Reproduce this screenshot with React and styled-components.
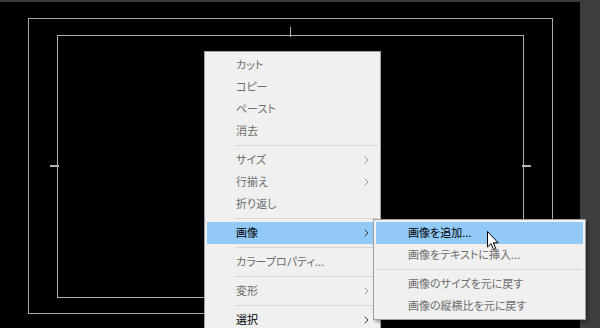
import React from 'react';
import styled, { createGlobalStyle } from 'styled-components';

const GlobalStyle = createGlobalStyle`
  html, body {
    margin: 0;
    padding: 0;
    background: #000;
  }
  body {
    font-family: 'Noto Sans CJK JP', 'Noto Sans', sans-serif;
  }
`;

// Ventana completa
const Screen = styled.div`
  width: 600px;
  height: 328px;
  display: flex;
  flex-direction: column;
  background: #3c3c3c;
  overflow: hidden;
`;

const Body = styled.div`
  flex: 1;
  display: flex;
  margin-top: 2px;
`;

// Lienzo negro con los marcos
const Canvas = styled.div`
  position: relative;
  flex: 1;
  background: #000;
  padding: 16px 0 0 28px;
`;

const SidePanel = styled.div`
  width: 20px;
  background: #3e3e3e;
`;

const Frame = styled.div`
  box-sizing: border-box;
  border: 1px solid ${({ $color }) => $color};
  width: ${({ $w }) => $w}px;
  height: ${({ $h }) => $h}px;
  padding: ${({ $pad }) => $pad};
`;

const Tick = styled.div`
  position: absolute;
  background: #b4b4b4;
  left: ${({ $x }) => $x}px;
  top: ${({ $y }) => $y}px;
  width: ${({ $w }) => $w}px;
  height: ${({ $h }) => $h}px;
`;

// Menús contextuales
const Menu = styled.div`
  position: absolute;
  left: ${({ $x }) => $x}px;
  top: ${({ $y }) => $y}px;
  width: ${({ $w }) => $w}px;
  box-sizing: border-box;
  background: #f0f0f0;
  border: 1px solid #a0a0a0;
  padding: 2px;
  box-shadow: 2px 2px 3px rgba(0, 0, 0, 0.35);
  z-index: ${({ $z }) => $z || 1};
`;

const Item = styled.div`
  box-sizing: border-box;
  height: 22px;
  display: flex;
  align-items: center;
  justify-content: space-between;
  padding: 0 9px 2px ${({ $indent }) => $indent}px;
  font-size: 11px;
  font-feature-settings: 'palt';
  color: ${({ $dark }) => ($dark ? '#000' : '#6d6d6d')};
  background: ${({ $active }) => ($active ? '#91c9f7' : 'transparent')};
  white-space: nowrap;
`;

const Separator = styled.div`
  height: 1px;
  background: #d7d7d7;
  margin: 3px 0 3px ${({ $indent }) => $indent}px;
`;

const ArrowBox = styled.span`
  display: flex;
  padding-top: 2px;
`;

const Arrow = ({ dark }) => (
  <ArrowBox>
    <svg width="5" height="8" viewBox="0 0 5 8">
      <path d="M0.7 0.7 L4 4 L0.7 7.3" fill="none" stroke={dark ? '#333' : '#9a9a9a'} strokeWidth="1" />
    </svg>
  </ArrowBox>
);

const CursorBox = styled.div`
  position: absolute;
  left: 487px;
  top: 229px;
  z-index: 5;
  line-height: 0;
`;

const Cursor = () => (
  <CursorBox>
    <svg width="13" height="20" viewBox="0 0 13 20">
      <path
        d="M0.5 0.5 L0.5 16 L4 12.6 L6.6 18.6 L8.8 17.6 L6.3 11.8 L11.2 11.8 Z"
        fill="#fff"
        stroke="#000"
        strokeWidth="1"
        strokeLinejoin="round"
      />
    </svg>
  </CursorBox>
);

const mainItems = [
  { label: 'カット' },
  { label: 'コピー' },
  { label: 'ペースト' },
  { label: '消去' },
  { sep: true },
  { label: 'サイズ', sub: true },
  { label: '行揃え', sub: true },
  { label: '折り返し' },
  { sep: true },
  { label: '画像', sub: true, active: true, dark: true },
  { sep: true },
  { label: 'カラープロパティ...' },
  { sep: true },
  { label: '変形', sub: true },
  { sep: true },
  { label: '選択', sub: true, dark: true },
];

const subItems = [
  { label: '画像を追加...', active: true, dark: true },
  { label: '画像をテキストに挿入...' },
  { sep: true },
  { label: '画像のサイズを元に戻す' },
  { label: '画像の縦横比を元に戻す' },
];

const renderItems = (items, indent, sepIndent) =>
  items.map((it, i) =>
    it.sep ? (
      <Separator key={i} $indent={sepIndent} />
    ) : (
      <Item key={i} $indent={indent} $active={it.active} $dark={it.dark}>
        <span>{it.label}</span>
        {it.sub && <Arrow dark={it.dark} />}
      </Item>
    )
  );

const App = () => {
  return (
    <>
      <GlobalStyle />
      <Screen>
        <Body>
          <Canvas>
            <Frame $color="#a8a8a8" $w={525} $h={296} $pad="16px 28px">
              <Frame $color="#b0b0b0" $w={467} $h={263} $pad="0" />
            </Frame>
            <Tick $x={290} $y={25} $w={1} $h={10} />
            <Tick $x={50} $y={163} $w={9} $h={2} />
            <Tick $x={522} $y={163} $w={9} $h={2} />

            <Menu $x={204} $y={49} $w={177}>
              {renderItems(mainItems, 29, 28)}
            </Menu>
            <Menu $x={373} $y={217} $w={213} $z={2}>
              {renderItems(subItems, 32, 0)}
            </Menu>
            <Cursor />
          </Canvas>
          <SidePanel />
        </Body>
      </Screen>
    </>
  );
};

export default App;
